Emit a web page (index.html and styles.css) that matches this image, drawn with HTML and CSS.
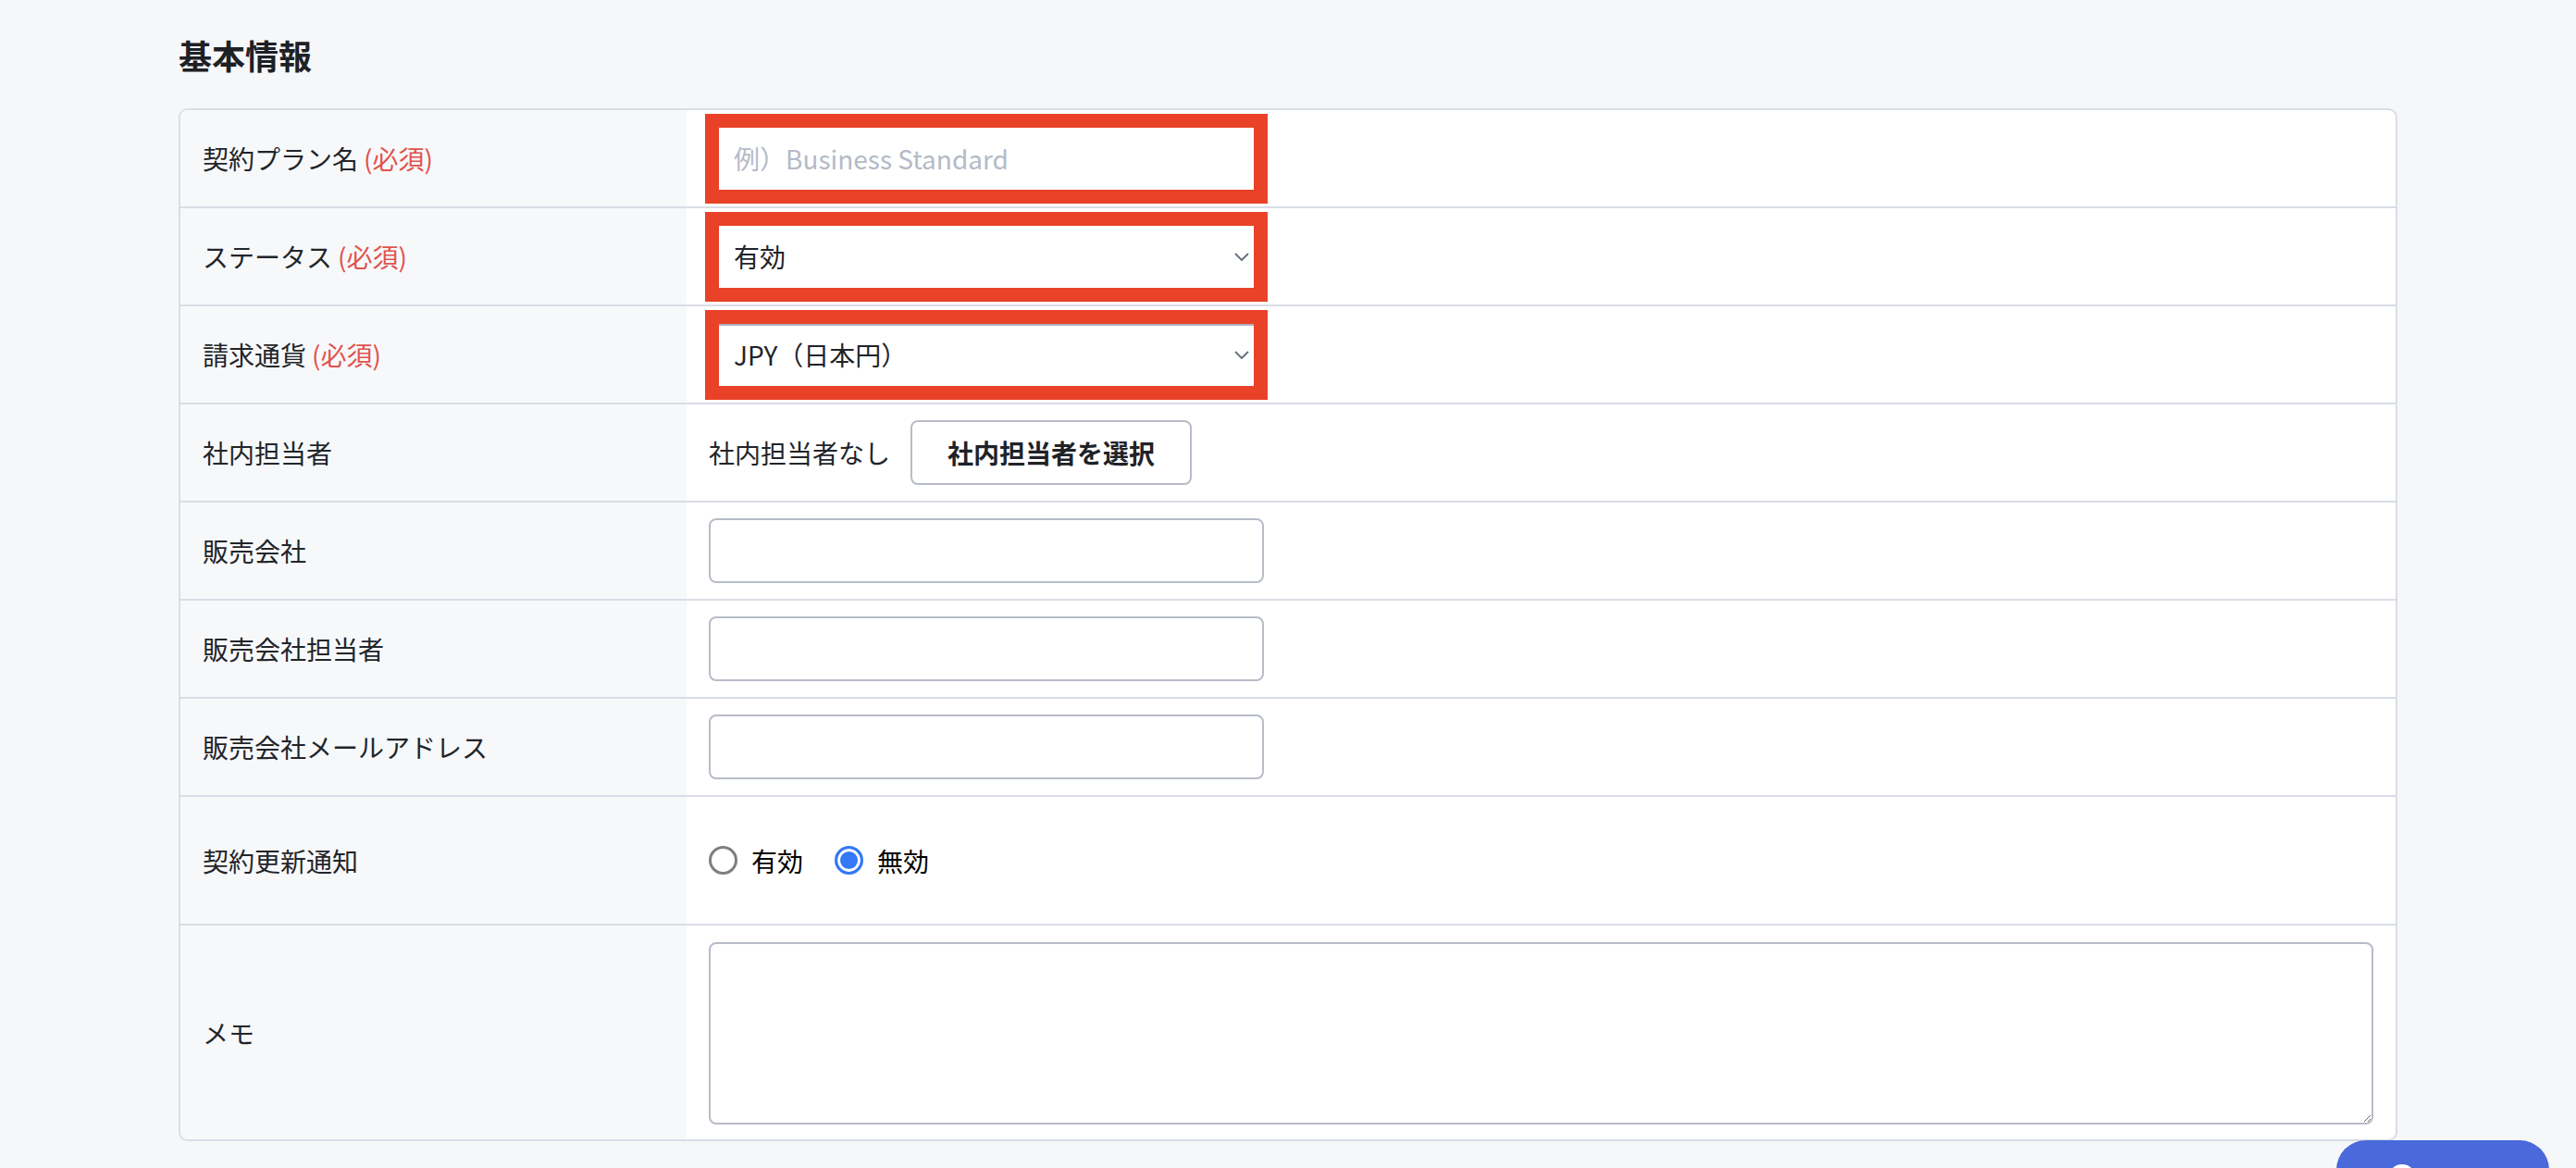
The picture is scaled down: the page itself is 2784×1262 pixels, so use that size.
FILE: index.html
```html
<!DOCTYPE html>
<html lang="ja">
<head>
<meta charset="utf-8">
<title>基本情報</title>
<link rel="stylesheet" href="styles.css">
</head>
<body>
<main class="page">
  <h2 class="section-title">基本情報</h2>

  <div class="form-card">
    <div class="form-row">
      <div class="form-label">契約プラン名<span class="req">(必須)</span></div>
      <div class="form-value">
        <div class="mark">
          <input class="field" type="text" placeholder="例）Business Standard">
        </div>
      </div>
    </div>

    <div class="form-row">
      <div class="form-label">ステータス<span class="req">(必須)</span></div>
      <div class="form-value">
        <div class="mark">
          <div class="select-wrap">
            <select class="field">
              <option>有効</option>
              <option>無効</option>
            </select>
            <svg class="chevron" viewBox="0 0 16 9" width="16" height="9"><path d="M1 1 L8 8 L15 1"/></svg>
          </div>
        </div>
      </div>
    </div>

    <div class="form-row">
      <div class="form-label">請求通貨<span class="req">(必須)</span></div>
      <div class="form-value">
        <div class="mark">
          <div class="select-wrap select-edge">
            <select class="field">
              <option>JPY（日本円）</option>
              <option>USD（米ドル）</option>
            </select>
            <svg class="chevron" viewBox="0 0 16 9" width="16" height="9"><path d="M1 1 L8 8 L15 1"/></svg>
          </div>
        </div>
      </div>
    </div>

    <div class="form-row">
      <div class="form-label">社内担当者</div>
      <div class="form-value">
        <span class="muted-value">社内担当者なし</span>
        <button class="btn-outline" type="button">社内担当者を選択</button>
      </div>
    </div>

    <div class="form-row">
      <div class="form-label">販売会社</div>
      <div class="form-value">
        <input class="text-input" type="text">
      </div>
    </div>

    <div class="form-row">
      <div class="form-label">販売会社担当者</div>
      <div class="form-value">
        <input class="text-input" type="text">
      </div>
    </div>

    <div class="form-row">
      <div class="form-label">販売会社メールアドレス</div>
      <div class="form-value">
        <input class="text-input" type="email">
      </div>
    </div>

    <div class="form-row form-row-tall">
      <div class="form-label">契約更新通知</div>
      <div class="form-value">
        <div class="radio-group">
          <label class="radio"><input type="radio" name="renewal-notice">有効</label>
          <label class="radio"><input type="radio" name="renewal-notice" checked>無効</label>
        </div>
      </div>
    </div>

    <div class="form-row form-row-memo">
      <div class="form-label">メモ</div>
      <div class="form-value form-value-memo">
        <textarea class="memo"></textarea>
      </div>
    </div>
  </div>
</main>

<button class="help-fab" type="button" aria-label="ヘルプ"><span class="fab-icon"></span></button>
</body>
</html>
```

FILE: styles.css
```css
* {
  box-sizing: border-box;
}

html,
body {
  margin: 0;
}

body {
  background: #f6f7f9;
  font-family: "Noto Sans CJK JP", "Noto Sans", sans-serif;
  color: #1f2328;
}

.page {
  width: 2398px;
  margin: 0 auto;
  padding-top: 32px;
}

.section-title {
  margin: 0 0 31px;
  font-size: 36px;
  line-height: 54px;
  font-weight: 700;
  color: #1d2126;
}

/* form table */
.form-card {
  border: 2px solid #d9dde5;
  border-radius: 10px;
  background: #fff;
  overflow: hidden;
}

.form-row {
  display: grid;
  grid-template-columns: 547px 1fr;
  min-height: 104px;
}

/* rows after the first carry a 2px divider on top of their 104px body */
.form-row + .form-row {
  min-height: 106px;
  border-top: 2px solid #d9dde5;
}

.form-row + .form-row-tall {
  min-height: 139px;
}

.form-label {
  display: flex;
  align-items: center;
  padding-left: 24px;
  background: #f7f8fa;
  font-size: 28px;
  color: #222529;
}

.req {
  margin-left: 6px;
  color: #e0534c;
}

.form-value {
  display: flex;
  align-items: center;
  padding: 0 24px;
  font-size: 28px;
}

.form-value-memo {
  padding: 18px 24px 16px;
}

/* highlighted required fields */
.mark {
  width: 608px;
  height: 97px;
  margin-left: -4px;
  border: 15px solid #e94228;
  background: #fff;
}

.field {
  display: block;
  width: 100%;
  height: 100%;
  margin: 0;
  padding: 0 16px;
  border: 0;
  outline: none;
  background: #fff;
  font-family: inherit;
  font-size: 28px;
  color: #1f2328;
  appearance: none;
  -webkit-appearance: none;
}

.field::placeholder {
  color: #b4bac7;
}

.select-wrap {
  position: relative;
  height: 100%;
}

.select-edge {
  box-shadow: inset 0 2px 0 #aeb3c0;
}

.select-edge .field {
  background: transparent;
}

.chevron {
  position: absolute;
  right: 5px;
  top: 50%;
  margin-top: -4px;
  pointer-events: none;
  fill: none;
  stroke: #6b7280;
  stroke-width: 2;
}

.muted-value {
  color: #222529;
}

.btn-outline {
  height: 70px;
  margin-left: 22px;
  padding: 0 38px;
  border: 2px solid #b7bcc8;
  border-radius: 8px;
  background: #fff;
  font-family: inherit;
  font-size: 28px;
  font-weight: 700;
  color: #1f2328;
}

.text-input {
  width: 600px;
  height: 70px;
  margin: 0;
  padding: 0 16px;
  border: 2px solid #b7bcc8;
  border-radius: 8px;
  background: #fff;
  font-family: inherit;
  font-size: 28px;
}

.radio-group {
  display: flex;
  align-items: center;
  gap: 34px;
}

.radio {
  display: flex;
  align-items: center;
  gap: 15px;
  font-size: 28px;
  color: #000;
}

.radio input {
  appearance: none;
  -webkit-appearance: none;
  width: 31px;
  height: 31px;
  margin: 0;
  border: 3px solid #7f7f7f;
  border-radius: 50%;
  background: #fff;
}

.radio input:checked {
  border-color: #3478f6;
  background: #3478f6;
  box-shadow: inset 0 0 0 3px #fff;
}

.memo {
  display: block;
  width: 100%;
  height: 197px;
  margin: 0;
  padding: 12px 16px;
  border: 2px solid #b7bcc8;
  border-radius: 8px;
  background: #fff;
  font-family: inherit;
  font-size: 28px;
}

/* floating help button */
.help-fab {
  position: fixed;
  right: 29px;
  bottom: -66px;
  width: 230px;
  height: 96px;
  padding: 0;
  border: 0;
  border-radius: 32px;
  background: #4a69db;
}

.fab-icon {
  position: absolute;
  left: 56px;
  top: 26px;
  width: 30px;
  height: 30px;
  border-radius: 50%;
  background: #fff;
}
```
